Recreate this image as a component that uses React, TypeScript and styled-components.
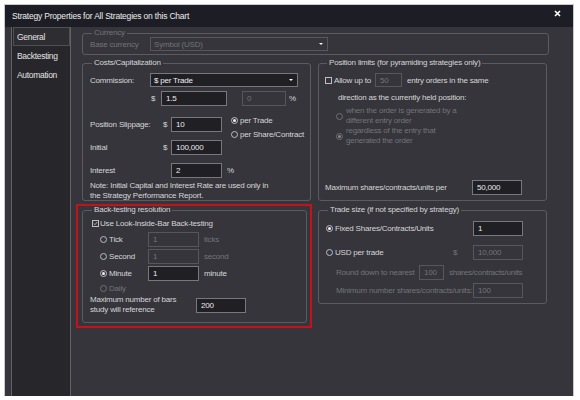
import React from "react";
import styled, { createGlobalStyle } from "styled-components";

const C = {
  frame: "#35353b",
  title: "#1d1e25",
  side: "#27272b",
  sideLine: "#616166",
  group: "#5b5b61",
  text: "#d6d6d6",
  dim: "#74747a",
  inputBg: "#1f1f24",
  inputBorder: "#77777d",
  disBorder: "#56565c",
  red: "#c4111a",
};

const Global = createGlobalStyle`
  html, body { margin: 0; padding: 0; background: #ffffff; }
  body {
    font-family: "Liberation Sans", Arial, sans-serif;
    font-size: 8px;
    letter-spacing: -0.2px;
    color: ${C.text};
  }
  * { box-sizing: border-box; }
`;

const Window = styled.div`
  margin: 5px 0 0 5px;
  width: 568px;
  height: 391px;
  display: flex;
  flex-direction: column;
  background: ${C.frame};
  outline: 1px solid #c9c9cd;
`;

const TitleBar = styled.div`
  flex: none;
  height: 22px;
  display: flex;
  align-items: center;
  justify-content: space-between;
  padding: 0 12px 0 7px;
  background: ${C.title};
`;

const Title = styled.span`
  color: #ececec;
  font-size: 8.5px;
`;

const Close = styled.span`
  align-self: flex-start;
  margin-top: 5px;
  display: flex;
`;

const Body = styled.div`
  flex: 1;
  display: flex;
  min-height: 0;
`;

const Sidebar = styled.nav`
  flex: none;
  margin-left: 6px;
  width: 60px;
  display: flex;
  flex-direction: column;
  background: ${C.side};
  border-left: 1px solid ${C.sideLine};
  border-right: 1px solid ${C.sideLine};
`;

const NavItem = styled.div<{ $active?: boolean }>`
  height: 19px;
  margin-left: 1px;
  display: flex;
  align-items: center;
  padding-left: ${(p) => (p.$active ? 3 : 4)}px;
  font-size: 8.5px;
  letter-spacing: -0.3px;
  color: #e2e2e2;
  border: ${(p) => (p.$active ? "1px solid #4f4f55" : "none")};
  background: ${(p) => (p.$active ? "#2d2d32" : "transparent")};
`;

const Content = styled.main`
  flex: 1;
  padding: 2px 0 0 11px;
  display: flex;
  flex-direction: column;
`;

const Group = styled.fieldset<{ $w?: number; $h: number; $pl: number; $pr?: number }>`
  flex: none;
  margin: 0;
  min-width: 0;
  width: ${(p) => (p.$w ? `${p.$w}px` : "100%")};
  height: ${(p) => p.$h}px;
  padding: 0 ${(p) => p.$pr ?? 0}px 0 ${(p) => p.$pl}px;
  border: 1px solid ${C.group};
  border-radius: 3px;
  display: flex;
  flex-direction: column;
`;

const Legend = styled.legend<{ $dim?: boolean }>`
  padding: 0 2px;
  margin-left: 2px;
  line-height: 8px;
  height: 8px;
  color: ${(p) => (p.$dim ? C.dim : C.text)};
`;

const Row = styled.div<{ $mt?: number; $h?: number; $pl?: number }>`
  flex: none;
  display: flex;
  align-items: center;
  margin-top: ${(p) => p.$mt ?? 0}px;
  height: ${(p) => (p.$h ? `${p.$h}px` : "auto")};
  padding-left: ${(p) => p.$pl ?? 0}px;
  white-space: nowrap;
`;

const Text = styled.span<{ $w?: number; $ml?: number; $dim?: boolean; $auto?: boolean }>`
  flex: none;
  width: ${(p) => (p.$w ? `${p.$w}px` : "auto")};
  margin-left: ${(p) => (p.$auto ? "auto" : `${p.$ml ?? 0}px`)};
  color: ${(p) => (p.$dim ? C.dim : "inherit")};
  white-space: nowrap;
`;

const Lines = styled.span<{ $ml?: number; $dim?: boolean; $w?: number }>`
  display: block;
  flex: none;
  width: ${(p) => (p.$w ? `${p.$w}px` : "auto")};
  margin-left: ${(p) => p.$ml ?? 0}px;
  line-height: 10px;
  color: ${(p) => (p.$dim ? C.dim : "inherit")};
  white-space: nowrap;
`;

const Field = styled.input<{ $w: number; $h?: number; $ml?: number; $auto?: boolean }>`
  flex: none;
  width: ${(p) => p.$w}px;
  height: ${(p) => p.$h ?? 15}px;
  margin: 0 0 0 ${(p) => (p.$auto ? "auto" : `${p.$ml ?? 0}px`)};
  padding: 0 0 0 4px;
  font: inherit;
  letter-spacing: inherit;
  color: #ececec;
  background: ${C.inputBg};
  border: 1px solid ${C.inputBorder};
  border-radius: 0;
  outline: none;
  &:disabled {
    color: ${C.dim};
    background: transparent;
    border-color: ${C.disBorder};
  }
`;

const Select = styled.div<{ $w: number; $disabled?: boolean }>`
  flex: none;
  width: ${(p) => p.$w}px;
  height: 14px;
  display: flex;
  align-items: center;
  justify-content: space-between;
  padding: 0 4px 0 3px;
  color: ${(p) => (p.$disabled ? C.dim : "#f0f0f0")};
  background: ${(p) => (p.$disabled ? "transparent" : C.inputBg)};
  border: 1px solid ${(p) => (p.$disabled ? C.disBorder : C.inputBorder)};
`;

const Arrow = styled.span`
  width: 0;
  height: 0;
  border-left: 2px solid transparent;
  border-right: 2px solid transparent;
  border-top: 2px solid #ffffff;
`;

const Radio = styled.span<{ $checked?: boolean; $disabled?: boolean }>`
  flex: none;
  width: 7px;
  height: 7px;
  border-radius: 50%;
  border: 1px solid ${(p) => (p.$disabled ? "#707076" : "#bdbdc2")};
  background: ${C.frame};
  display: flex;
  align-items: center;
  justify-content: center;
  &::after {
    content: "";
    display: ${(p) => (p.$checked ? "block" : "none")};
    width: 3px;
    height: 3px;
    border-radius: 50%;
    background: ${(p) => (p.$disabled ? "#8a8a90" : "#f2f2f2")};
  }
`;

const Check = styled.span`
  flex: none;
  width: 7px;
  height: 7px;
  border: 1px solid #bdbdc2;
  display: flex;
  align-items: center;
  justify-content: center;
`;

const Columns = styled.div`
  display: flex;
  align-items: flex-start;
  gap: 7px;
  margin-top: 4px;
`;

const Column = styled.div`
  flex: none;
  width: 229px;
  display: flex;
  flex-direction: column;
  align-items: flex-start;
`;

const Highlight = styled.div`
  flex: none;
  margin: 3px 0 0 -6px;
  width: 236px;
  height: 124px;
  padding: 0 3px 3px 4px;
  border: 2px solid ${C.red};
`;

const RateGrid = styled.div`
  margin-top: 11px;
  display: grid;
  grid-template-columns: 73px 8px 51px 1fr;
  grid-auto-rows: 15px;
  row-gap: 8px;
  align-items: center;
`;

const RadioStack = styled.div`
  grid-column: 4;
  grid-row: 1 / span 2;
  align-self: start;
  margin: -3px 0 0 9px;
  display: flex;
  flex-direction: column;
`;

const Option = styled.label`
  height: 13.5px;
  display: flex;
  align-items: center;
  gap: 2px;
  white-space: nowrap;
`;

const Tick = () => (
  <svg width="7" height="7" viewBox="0 0 7 7">
    <path d="M1 3.4 L2.8 5.2 L6 1.4" fill="none" stroke="#c8c8cc" strokeWidth="1.1" />
  </svg>
);

export default function App() {
  return (
    <>
      <Global />
      <Window>
        <TitleBar>
          <Title>Strategy Properties for All Strategies on this Chart</Title>
          <Close aria-label="Close">
            <svg width="7" height="7" viewBox="0 0 7 7">
              <path d="M1 1 L6 6 M6 1 L1 6" stroke="#ffffff" strokeWidth="1.6" />
            </svg>
          </Close>
        </TitleBar>
        <Body>
          <Sidebar>
            <NavItem $active>General</NavItem>
            <NavItem>Backtesting</NavItem>
            <NavItem>Automation</NavItem>
          </Sidebar>
          <Content>
            <Group $w={467} $h={26} $pl={7}>
              <Legend $dim>Currency</Legend>
              <Row $h={14}>
                <Text $w={60} $dim>Base currency</Text>
                <Select $w={178} $disabled>
                  Symbol (USD)
                  <Arrow />
                </Select>
              </Row>
            </Group>
            <Columns>
              <Column>
                <Group $w={229} $h={142} $pl={7}>
                  <Legend>Costs/Capitalization</Legend>
                  <Row $mt={6} $h={14}>
                    <Text $w={60}>Commission:</Text>
                    <Select $w={148}>
                      $ per Trade
                      <Arrow />
                    </Select>
                  </Row>
                  <Row $mt={4} $h={15} $pl={61}>
                    <Text $w={10}>$</Text>
                    <Field $w={66} value="1.5" readOnly />
                    <Field $w={44} $ml={15} value="0" disabled readOnly />
                    <Text $ml={3}>%</Text>
                  </Row>
                  <RateGrid>
                    <Text>Position Slippage:</Text>
                    <Text>$</Text>
                    <Field $w={51} value="10" readOnly />
                    <RadioStack>
                      <Option>
                        <Radio $checked />
                        per Trade
                      </Option>
                      <Option>
                        <Radio />
                        per Share/Contract
                      </Option>
                    </RadioStack>
                    <Text>Initial</Text>
                    <Text>$</Text>
                    <Field $w={51} value="100,000" readOnly />
                    <Text>Interest</Text>
                    <span />
                    <Field $w={51} value="2" readOnly />
                    <Text $ml={5}>%</Text>
                  </RateGrid>
                  <Row $mt={3}>
                    <Lines>
                      Note: Initial Capital and Interest Rate are used only in
                      <br />
                      the Strategy Performance Report.
                    </Lines>
                  </Row>
                </Group>
                <Highlight>
                  <Group $w={225} $h={117} $pl={7}>
                    <Legend>Back-testing resolution</Legend>
                    <Row $mt={4} $h={10} $pl={2}>
                      <Check>
                        <Tick />
                      </Check>
                      <Text $ml={1}>Use Look-Inside-Bar Back-testing</Text>
                    </Row>
                    <Row $mt={4} $h={15} $pl={10}>
                      <Radio />
                      <Text $ml={2} $w={39}>Tick</Text>
                      <Field $w={51} value="1" disabled readOnly />
                      <Text $ml={5} $dim>ticks</Text>
                    </Row>
                    <Row $mt={2} $h={15} $pl={10}>
                      <Radio />
                      <Text $ml={2} $w={39}>Second</Text>
                      <Field $w={51} value="1" disabled readOnly />
                      <Text $ml={5} $dim>second</Text>
                    </Row>
                    <Row $mt={2} $h={15} $pl={10}>
                      <Radio $checked />
                      <Text $ml={2} $w={39}>Minute</Text>
                      <Field $w={51} value="1" readOnly />
                      <Text $ml={5}>minute</Text>
                    </Row>
                    <Row $mt={1} $h={13} $pl={10}>
                      <Radio $disabled />
                      <Text $ml={2} $dim>Daily</Text>
                    </Row>
                    <Row $h={20}>
                      <Lines $w={106}>
                        Maximum number of bars
                        <br />
                        study will reference
                      </Lines>
                      <Field $w={50} value="200" readOnly />
                    </Row>
                  </Group>
                </Highlight>
              </Column>
              <Column>
                <Group $w={229} $h={142} $pl={6}>
                  <Legend>Position limits (for pyramiding strategies only)</Legend>
                  <Row $mt={6} $h={14}>
                    <Check />
                    <Text $ml={2} $w={41}>Allow up to</Text>
                    <Field $w={27} $h={14} value="50" disabled readOnly />
                    <Text $ml={5}>entry orders in the same</Text>
                  </Row>
                  <Row $mt={5} $h={10} $pl={13}>
                    <Text>direction as the currently held position:</Text>
                  </Row>
                  <Row $mt={4} $pl={11}>
                    <Radio $disabled />
                    <Lines $ml={3} $dim>
                      when the order is generated by a
                      <br />
                      different entry order
                    </Lines>
                  </Row>
                  <Row $pl={11}>
                    <Radio $checked $disabled />
                    <Lines $ml={3} $dim>
                      regardless of the entry that
                      <br />
                      generated the order
                    </Lines>
                  </Row>
                  <Row $mt={34} $h={15}>
                    <Text $w={147}>Maximum shares/contracts/units per</Text>
                    <Field $w={50} value="50,000" readOnly />
                  </Row>
                </Group>
                <Group $w={229} $h={98} $pl={7} $pr={23} style={{ marginTop: 5 }}>
                  <Legend>Trade size (if not specified by strategy)</Legend>
                  <Row $mt={7} $h={15}>
                    <Radio $checked />
                    <Text $ml={2}>Fixed Shares/Contracts/Units</Text>
                    <Field $w={50} $auto value="1" readOnly />
                  </Row>
                  <Row $mt={9} $h={15}>
                    <Radio />
                    <Text $ml={2}>USD per trade</Text>
                    <Text $auto $w={20} $dim>$</Text>
                    <Field $w={50} value="10,000" disabled readOnly />
                  </Row>
                  <Row $mt={5} $h={15} $pl={10}>
                    <Text $w={83} $dim>Round down to nearest</Text>
                    <Field $w={25} value="100" disabled readOnly />
                    <Text $ml={5} $dim>shares/contracts/units</Text>
                  </Row>
                  <Row $mt={3} $h={15} $pl={10}>
                    <Text $dim>Minimum number shares/contracts/units:</Text>
                    <Field $w={50} $auto value="100" disabled readOnly />
                  </Row>
                </Group>
              </Column>
            </Columns>
          </Content>
        </Body>
      </Window>
    </>
  );
}
